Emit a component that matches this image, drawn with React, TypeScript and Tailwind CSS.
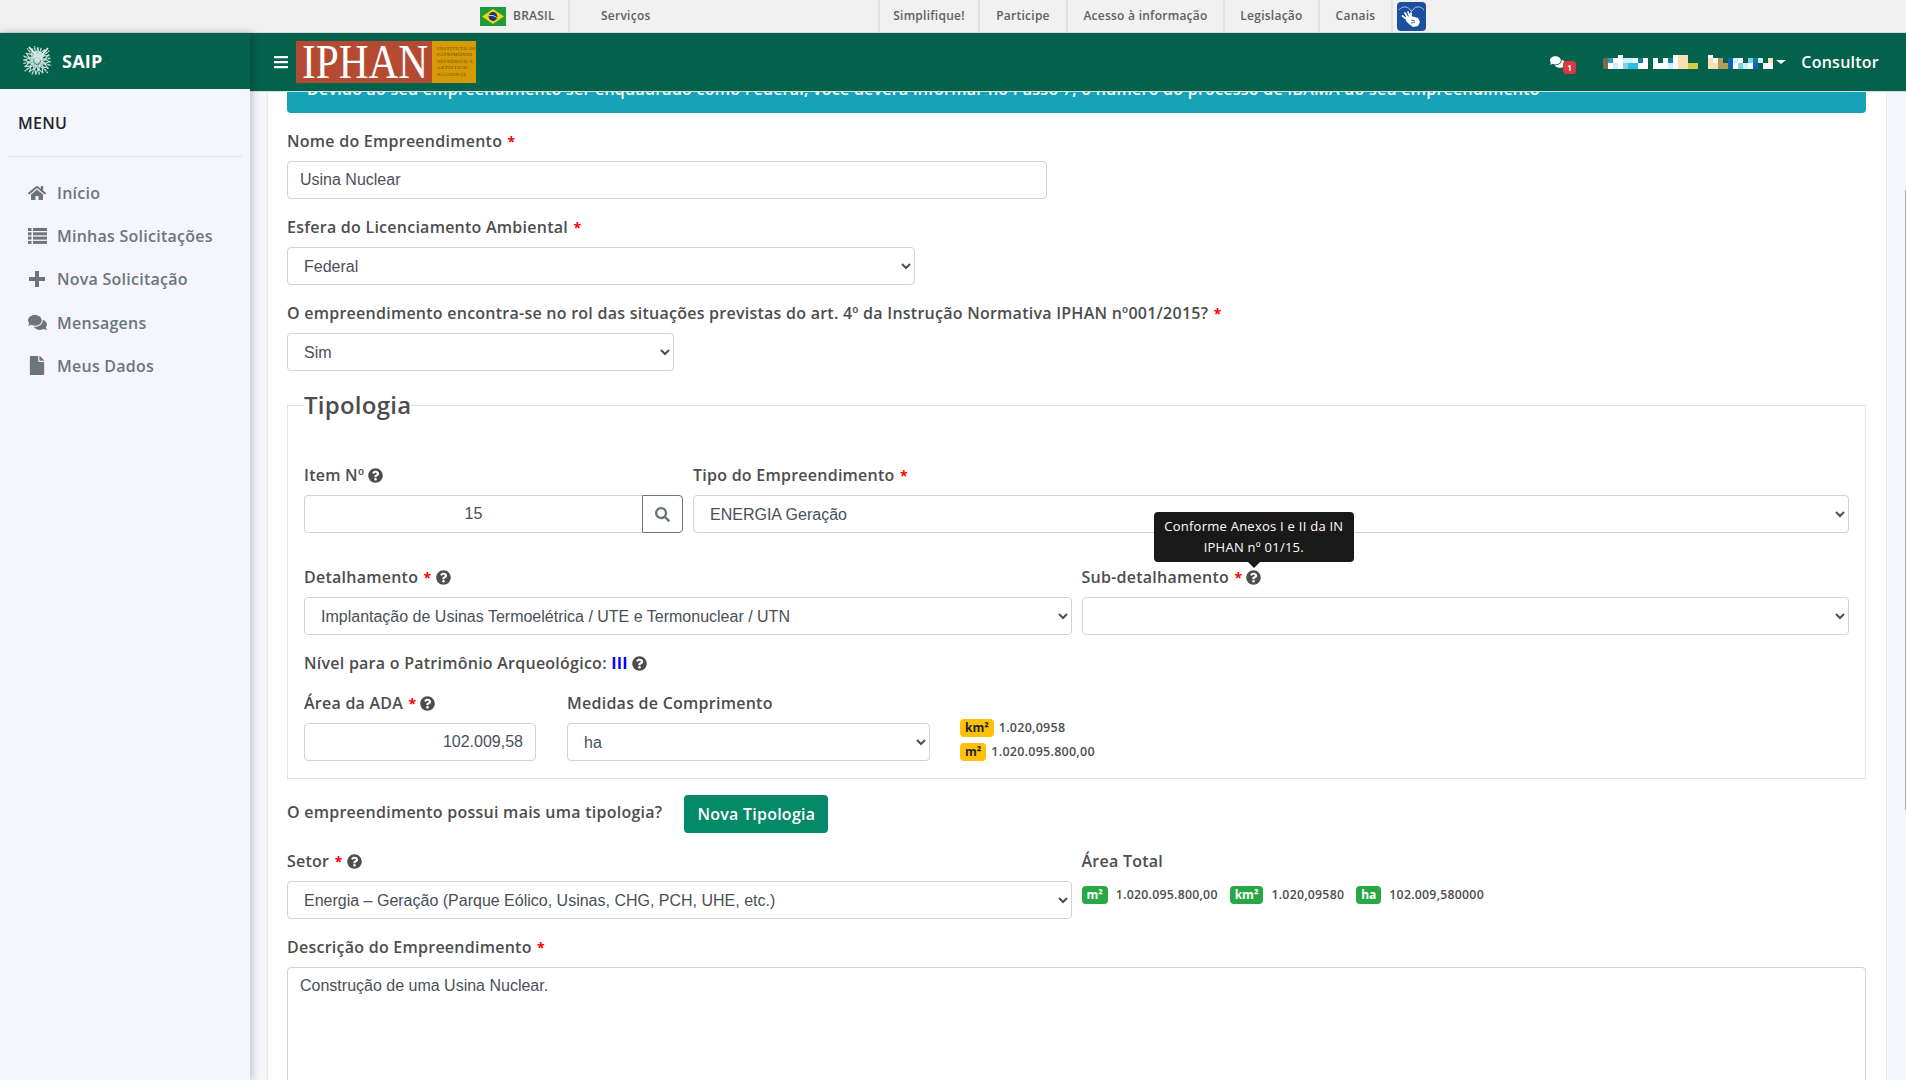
import type { ReactNode } from 'react';
import { FaBars, FaComments, FaFile, FaHome, FaQuestionCircle, FaSearch } from 'react-icons/fa';

function ListIcon() {
  return (
    <svg viewBox="0 0 19 16" className="h-4 w-[19px]" fill="currentColor">
      <rect x="0" y="0" width="3.500" height="3" />
      <rect x="0" y="4.300" width="3.500" height="3" />
      <rect x="0" y="8.600" width="3.500" height="3" />
      <rect x="0" y="12.900" width="3.500" height="3" />
      <rect x="5" y="0" width="14" height="3" />
      <rect x="5" y="4.300" width="14" height="3" />
      <rect x="5" y="8.600" width="14" height="3" />
      <rect x="5" y="12.900" width="14" height="3" />
    </svg>
  );
}

function PlusIcon() {
  return (
    <svg viewBox="0 0 16 16" className="h-4 w-4" fill="currentColor">
      <path d="M6 0h4v6h6v4h-6v6H6v-6H0V6h6z" />
    </svg>
  );
}

const menu = [
  { label: 'Início', icon: <FaHome className="h-[18px] w-[18px]" /> },
  { label: 'Minhas Solicitações', icon: <ListIcon /> },
  { label: 'Nova Solicitação', icon: <PlusIcon /> },
  { label: 'Mensagens', icon: <FaComments className="h-[17px] w-[19px]" /> },
  { label: 'Meus Dados', icon: <FaFile className="h-[19px] w-[16px]" /> },
];

const topLinks = [
  { label: 'Simplifique!', width: 'w-[100px]' },
  { label: 'Participe', width: 'w-[88px]' },
  { label: 'Acesso à informação', width: 'w-[157px]' },
  { label: 'Legislação', width: 'w-[95px]' },
  { label: 'Canais', width: 'w-[73px]' },
];

const inputClass =
  "h-[38px] w-full rounded border border-[#ced4da] bg-white px-3 font-['Liberation_Sans',sans-serif] text-base tracking-normal text-[#495057] outline-none";

function Help() {
  return <FaQuestionCircle className="ml-1 inline h-[15px] w-[15px] align-[-2px] text-[#4d4d4d]" />;
}

function Req() {
  return <span className="ml-[1px] text-sm font-bold text-[#ff0000]"> *</span>;
}

function Label({ children, className = '' }: { children: ReactNode; className?: string }) {
  return <div className={`mb-2 h-6 whitespace-nowrap text-base leading-6 font-semibold text-[#4d4d4d] ${className}`}>{children}</div>;
}

function Select({ value, className = '' }: { value: string; className?: string }) {
  return (
    <select defaultValue={value} className={`${inputClass} ${className}`}>
      <option value={value}>{value}</option>
    </select>
  );
}

function Badge({ children, green }: { children: ReactNode; green?: boolean }) {
  return (
    <span
      className={`inline-flex h-[18px] items-center rounded px-[5px] text-xs font-bold tracking-normal ${
        green ? 'bg-[#28a745] text-white' : 'bg-[#ffc107] text-[#212529]'
      }`}
    >
      {children}
    </span>
  );
}

function BrazilFlag() {
  return (
    <svg viewBox="0 0 26 19" className="h-[19px] w-[26px]">
      <rect width="26" height="19" fill="#1f9a3c" />
      <path d="M13 2 24 9.500 13 17 2 9.500Z" fill="#f2d500" />
      <circle cx="13" cy="9.500" r="4.400" fill="#1c2f7c" />
      <path d="M8.900 8.600c3-.6 5.800.2 8 2" stroke="#fff" strokeWidth=".8" fill="none" />
    </svg>
  );
}

function HandIcon() {
  return (
    <svg viewBox="0 0 29 29" className="h-[29px] w-[29px]">
      <rect width="29" height="29" rx="4" fill="#1c4fa0" />
      <path d="M2 8c3-4 8-4 11-.5M16 7.500c3-3.500 8-3.500 11 .5" stroke="#c9d8ef" strokeWidth=".8" fill="none" />
      <path d="M13 7.500l1.500 2 1.500-2" stroke="#fff" strokeWidth=".8" fill="none" />
      <g stroke="#fff" strokeWidth="1.700" strokeLinecap="round">
        <path d="M8 11l3 5M11 10l2 5M5.500 14l4 3M14 11l0 4" />
      </g>
      <path d="M9 15l5-1 7 2 2 4-2 4-5 1-4-3-3-3z" fill="#fff" />
      <path d="M14 18l4 1M14 21l4-1" stroke="#1c4fa0" strokeWidth=".8" />
    </svg>
  );
}

function SaipLogo() {
  const fronds = [
    { a: -100, l: 15 },
    { a: -72, l: 14 },
    { a: -40, l: 16 },
    { a: -12, l: 14 },
    { a: 18, l: 15 },
    { a: 48, l: 16 },
    { a: 80, l: 14 },
    { a: 110, l: 15 },
    { a: 140, l: 16 },
    { a: 170, l: 14 },
    { a: 200, l: 15 },
    { a: 232, l: 16 },
  ];
  return (
    <svg viewBox="0 0 32 32" className="h-8 w-8">
      <g stroke="#c5ddd4" fill="none">
        {fronds.map(({ a, l }) => (
          <g key={a} transform={`rotate(${a} 16 16)`}>
            <path d={`M16 16h${l}`} strokeWidth="1.400" strokeDasharray="3 .6" />
            <path d="M20 16l4-4.500M20 16l4 4.500M24 16l5-4M24 16l5 4" strokeWidth="1.200" />
          </g>
        ))}
      </g>
      <circle cx="17" cy="11" r="5" fill="#dcebe6" opacity=".75" />
      <path d="M8 2l6 7M27 3l-6 7" stroke="#eef6f3" strokeWidth="1.600" />
    </svg>
  );
}

function IphanLogo() {
  return (
    <div className="flex h-[42px] w-[180px]">
      <div className="w-[136px] bg-[#b34a31] pl-[6px] font-['Liberation_Serif',serif] text-[48px] leading-[42px] tracking-normal text-white">
        <span className="inline-block origin-left scale-x-[0.86]">IPHAN</span>
      </div>
      <div className="flex w-[44px] flex-col justify-center bg-[#d59a06] pl-[5px] font-['Liberation_Serif',serif] text-[5px] leading-[6.600px] tracking-[0.5px] whitespace-nowrap text-[#6b4c10]">
        <span>INSTITUTO DO</span>
        <span>PATRIMÔNIO</span>
        <span>HISTÓRICO E</span>
        <span>ARTÍSTICO</span>
        <span>NACIONAL</span>
      </div>
    </div>
  );
}

// the user's name is pixelated in the picture
const palette: Record<string, string> = {
  b: '#7b6a4f',
  t: '#2f9fc4',
  l: '#c9f1f8',
  w: '#ffffff',
  c: '#2bbfe0',
  n: '#0d7da6',
  p: '#fbe0b4',
  y: '#d9c84a',
  o: '#b99b58',
  d: '#0a66b0',
  s: '#7fd0e0',
};
const mosaic = [
  { y: 0, h: 3, row: '...w..........wpp....w.....' },
  { y: 3, h: 5, row: 'btwwllwnw.w.wnwpp....pwo.dlw.snl.p' },
  { y: 8, h: 6, row: 'bwlwsccww.wwwlwppyy..ppoodwslwd.ww' },
];

function UserMosaic() {
  return (
    <svg viewBox="0 0 170 14" className="h-[14px] w-[170px]">
      {mosaic.map(({ y, h, row }) =>
        row.split('').map((ch, x) =>
          palette[ch] ? <rect key={`${x}-${y}`} x={x * 5} y={y} width="5" height={h} fill={palette[ch]} /> : null,
        ),
      )}
    </svg>
  );
}

export default function App() {
  return (
    <div className="relative flex h-screen flex-col overflow-hidden bg-[#f4f6fb] font-['Open_Sans',sans-serif] tracking-[0.25px]">
      {/* Barra do governo */}
      <div className="flex h-[33px] shrink-0 items-stretch border-b border-[#dcdcdc] bg-[#f1f1f1] pl-[480px] text-xs font-semibold text-[#606060]">
        <div className="flex w-[88px] items-center gap-[7px]">
          <BrazilFlag />
          <span>BRASIL</span>
        </div>
        <div className="flex w-[310px] items-center border-l-2 border-[#e2e2e2] pl-[31px]">Serviços</div>
        {topLinks.map((l) => (
          <div key={l.label} className={`flex items-center justify-center border-l-2 border-[#e2e2e2] ${l.width}`}>
            {l.label}
          </div>
        ))}
        <div className="flex items-center border-l-2 border-[#e2e2e2] pl-1">
          <HandIcon />
        </div>
      </div>

      <div className="flex min-h-0 flex-1">
        {/* Sidebar */}
        <aside className="relative z-20 w-[250px] shrink-0 bg-[#f4f6fb] shadow-[2px_0_8px_rgba(0,0,0,0.22)]">
          <div className="flex h-14 items-center gap-[9px] bg-[#03624c] pl-[21px] text-lg font-bold text-white">
            <SaipLogo />
            <span>SAIP</span>
          </div>
          <div className="mx-2 flex h-[68px] items-center border-b border-[#e1e3ea] pl-[10px] text-base font-semibold text-[#26262c]">
            <span>MENU</span>
          </div>
          <nav className="pt-[14px]">
            {menu.map((m) => (
              <div key={m.label} className="flex h-[43.300px] items-center text-base font-semibold text-[#6c757d]">
                <span className="flex w-[57px] justify-center pl-[17px]">{m.icon}</span>
                <span>{m.label}</span>
              </div>
            ))}
          </nav>
        </aside>

        <div className="flex min-w-0 flex-1 flex-col">
          {/* Navbar */}
          <header className="relative z-10 flex h-[59px] shrink-0 items-center border-b border-[#cfe3dc] bg-[#03624c] text-white">
            <FaBars className="ml-[23px] h-4 w-4" />
            <div className="ml-[7px]">
              <IphanLogo />
            </div>
            <div className="ml-auto flex items-center pr-[27px]">
              <div className="relative mr-[38px]">
                <FaComments className="h-[14px] w-[15px]" />
                <span className="absolute top-[6px] left-[13px] flex h-[13px] w-[13px] items-center justify-center rounded-[3px] bg-[#dc3545] text-[8px] font-bold text-white">
                  1
                </span>
              </div>
              <UserMosaic />
              <span className="mr-[15px] ml-[3px] h-0 w-0 border-x-[5px] border-t-[4px] border-x-transparent border-t-white" />
              <span className="text-base font-semibold">Consultor</span>
            </div>
          </header>

          <main className="flex min-h-0 flex-1 overflow-hidden pr-[19px] pl-[17px]">
            <div className="w-full border-x border-[#e8e9ee] bg-white pr-[20px] pl-[19px]">
              <div className="-mt-[27px] mb-4 rounded bg-[#17a2b8] py-3 pl-5 text-base leading-6 font-semibold whitespace-nowrap text-white">
                Devido ao seu empreendimento ser enquadrado como Federal, você deverá informar no Passo 7, o número do processo de IBAMA do seu empreendimento
              </div>

              <Label>
                Nome do Empreendimento <Req />
              </Label>
              <input defaultValue="Usina Nuclear" className={`${inputClass} mb-4 block max-w-[760px]`} />

              <Label>
                Esfera do Licenciamento Ambiental <Req />
              </Label>
              <Select value="Federal" className="mb-4 block max-w-[628px]" />

              <Label>
                O empreendimento encontra-se no rol das situações previstas do art. 4º da Instrução Normativa IPHAN nº001/2015? <Req />
              </Label>
              <Select value="Sim" className="block max-w-[387px]" />

              <fieldset className="mt-4 border border-[#e2e4e8] px-4 pb-[17px]">
                <legend className="text-2xl leading-9 font-semibold text-[#4d4d4d]">Tipologia</legend>

                <div className="mt-[40px] grid grid-cols-[379px_1fr] gap-x-[10px]">
                  <div>
                    <Label>
                      Item Nº
                      <Help />
                    </Label>
                    <div className="flex">
                      <input defaultValue="15" className={`${inputClass} rounded-r-none border-r-0 text-center`} />
                      <button className="flex h-[38px] w-[41px] shrink-0 items-center justify-center rounded-r border border-[#6c757d] text-[#6c757d]">
                        <FaSearch className="h-[15px] w-[15px]" />
                      </button>
                    </div>
                  </div>
                  <div>
                    <Label>
                      Tipo do Empreendimento <Req />
                    </Label>
                    <Select value="ENERGIA Geração" />
                  </div>
                </div>

                <div className="mt-8 grid grid-cols-2 gap-x-[10px]">
                  <div>
                    <Label>
                      Detalhamento <Req />
                      <Help />
                    </Label>
                    <Select value="Implantação de Usinas Termoelétrica / UTE e Termonuclear / UTN" />
                  </div>
                  <div>
                    <Label>
                      Sub-detalhamento <Req />
                      <span className="relative inline-block">
                        <Help />
                        <span className="absolute bottom-[27px] left-[calc(50%+2px)] z-10 w-[200px] -translate-x-1/2 rounded bg-[#191919] px-2 py-1 text-center text-[13px] leading-[20.800px] font-normal whitespace-normal text-white">
                          Conforme Anexos I e II da IN IPHAN nº 01/15.
                          <span className="absolute top-full left-1/2 h-0 w-0 -translate-x-1/2 border-x-[6px] border-t-[6px] border-x-transparent border-t-[#191919]" />
                        </span>
                      </span>
                    </Label>
                    <Select value="" />
                  </div>
                </div>

                <Label className="mt-4 !mb-4">
                  Nível para o Patrimônio Arqueológico: <span className="font-bold text-[#0000ff]">III</span>
                  <Help />
                </Label>

                <div className="flex">
                  <div className="w-[232px]">
                    <Label>
                      Área da ADA <Req />
                      <Help />
                    </Label>
                    <input defaultValue="102.009,58" className={`${inputClass} text-right`} />
                  </div>
                  <div className="ml-[31px] w-[363px]">
                    <Label>Medidas de Comprimento</Label>
                    <Select value="ha" />
                  </div>
                  <div className="ml-[30px] flex h-[70px] flex-col gap-[6px] pt-[28px] text-[12.500px] leading-[18px] font-semibold text-[#4d4d4d]">
                    <div className="flex items-center gap-[5px]">
                      <Badge>km²</Badge>
                      1.020,0958
                    </div>
                    <div className="flex items-center gap-[5px]">
                      <Badge>m²</Badge>
                      1.020.095.800,00
                    </div>
                  </div>
                </div>
              </fieldset>

              <div className="mt-4 flex items-start">
                <div className="mt-[5px] text-base leading-6 font-semibold text-[#4d4d4d]">O empreendimento possui mais uma tipologia?</div>
                <button className="ml-[22px] h-[38px] w-[144px] rounded bg-[#058a69] text-base font-semibold text-white">Nova Tipologia</button>
              </div>

              <div className="mt-4 grid grid-cols-2 gap-x-[10px]">
                <div>
                  <Label>
                    Setor <Req />
                    <Help />
                  </Label>
                  <Select value="Energia – Geração (Parque Eólico, Usinas, CHG, PCH, UHE, etc.)" />
                </div>
                <div>
                  <Label>Área Total</Label>
                  <div className="flex items-center pt-[5px] text-[12.300px] font-semibold text-[#4d4d4d]">
                    <Badge green>m²</Badge>
                    <span className="mr-3 ml-2">1.020.095.800,00</span>
                    <Badge green>km²</Badge>
                    <span className="mr-3 ml-2">1.020,09580</span>
                    <Badge green>ha</Badge>
                    <span className="ml-2">102.009,580000</span>
                  </div>
                </div>
              </div>

              <div className="mt-4">
                <Label>
                  Descrição do Empreendimento <Req />
                </Label>
                <textarea
                  defaultValue="Construção de uma Usina Nuclear."
                  className="h-[200px] w-full resize-none rounded border border-[#ced4da] bg-white px-3 py-[6px] font-['Liberation_Sans',sans-serif] text-base tracking-normal text-[#495057] outline-none"
                />
              </div>
            </div>
          </main>
        </div>
      </div>

      {/* barra de rolagem */}
      <div className="absolute top-[190px] right-0 h-[620px] w-px bg-[#a8a8a8]" />
    </div>
  );
}
